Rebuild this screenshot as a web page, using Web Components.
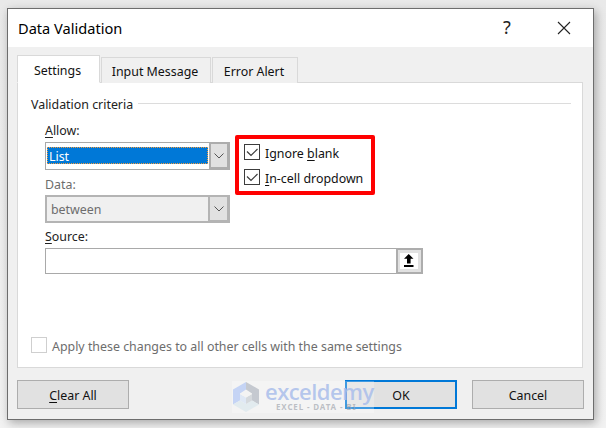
<!DOCTYPE html>
<html><head><meta charset="utf-8">
<style>
html,body{margin:0;padding:0;background:#f0f0f0;width:606px;height:428px;overflow:hidden}
body{font:13px "Noto Sans",sans-serif;color:#000;background:linear-gradient(#e9e9e9,#f2f2f2)}
</style></head><body>
<x-dialog>
  <span slot="title">Data Validation</span>
  <x-tabs slot="tabs"></x-tabs>
  <x-criteria slot="page"></x-criteria>
  <x-btn slot="left"><u style="text-underline-offset:2px">C</u>lear All</x-btn>
  <x-btn slot="right" primary>OK</x-btn>
  <x-btn slot="right">Cancel</x-btn>
  <x-watermark slot="over"></x-watermark>
</x-dialog>
<script>
function def(name, html){
  customElements.define(name, class extends HTMLElement{
    constructor(){super();const r=this.attachShadow({mode:'open'});r.innerHTML=html;}
  });
}
def('x-dialog',`<style>
:host{display:flex;flex-direction:column;box-sizing:border-box;width:587px;height:412px;margin:8px 0 0 7px;background:#f0f0f0;border:1px solid #6d6d6d;box-shadow:2px 3px 9px rgba(0,0,0,.3);position:relative}
.title{height:38px;flex:none;background:#fff;display:flex;align-items:center;padding-left:10px;font-size:14.6px}
.title .t{flex:1;padding-bottom:1px}
.help{width:16px;text-align:center;font-size:18px;margin-right:42px;color:#222;padding-bottom:2px}
.x{margin-right:22px;display:block}
.body{flex:1;padding:8px 10px 0 9px;display:flex;flex-direction:column}
.foot{display:flex;justify-content:space-between;margin-top:12px;margin-right:-1px}
.r{display:flex;gap:15px}
.l{display:flex}
</style>
<div class="title"><span class="t"><slot name="title"></slot></span><span class="help">?</span>
<svg class="x" width="14" height="14" viewBox="0 0 14 14"><path d="M1 1L13 13M13 1L1 13" stroke="#222" stroke-width="1.1" fill="none"/></svg></div>
<div class="body"><slot name="tabs"></slot><slot name="page"></slot>
<div class="foot"><div class="l"><slot name="left"></slot></div><div class="r"><slot name="right"></slot></div></div></div>
<slot name="over"></slot>`);

def('x-tabs',`<style>
:host{display:flex;align-items:flex-end;height:28px;flex:none;position:relative;z-index:1;margin-bottom:-1px}
.tab{box-sizing:border-box;height:26px;border:1px solid #d9d9d9;border-bottom:none;display:flex;align-items:center;justify-content:center;margin-left:1px;font-size:12.4px;color:#111;background:#f0f0f0;padding:2px 2px 0 0}
.a{height:28px;width:83px;margin-left:0;background:#fff;border-bottom:1px solid #fff;padding:3px 2px 0 0}
</style>
<div class="tab a">Settings</div><div class="tab" style="width:110px">Input Message</div><div class="tab" style="width:86px">Error Alert</div>`);

def('x-criteria',`<style>
:host{display:block;box-sizing:border-box;width:566px;height:286px;background:#fff;border:1px solid #d9d9d9;padding:11px 11px 0 13px;position:relative;font-size:12.4px;color:#222}
.head{display:flex;align-items:center;gap:5px;height:20px;color:#222}
.head i{flex:1;height:0;border-top:1px solid #dcdcdc;margin-top:-1px}
.main{padding-left:14px;margin-top:8px}
.lab{height:17px;line-height:17px}
.row{display:flex;gap:5px;align-items:flex-start;height:28px;margin-top:3px}
.dis{color:#6d6d6d}
.hl{box-sizing:border-box;width:140px;height:60px;flex:none;border:4px solid #f00;border-radius:2px;margin-top:-7px;padding:5px 0 0 5px;display:flex;flex-direction:column;gap:9px;color:#111}
.src{display:flex;width:378px;height:26px;margin-top:3px}
.src div{box-sizing:border-box;flex:1;border:1px solid #a9a9a9;border-right:none}
.src b{box-sizing:border-box;width:27px;border:2px solid #adadad;background:#e1e1e1;padding:3px 3px 3px 2px;display:block}
.src svg{display:block}
.apply{position:absolute;left:13px;top:254px;color:#6d6d6d}
u{text-underline-offset:2px}
</style>
<div class="head"><span>Validation criteria</span><i></i></div>
<div class="main">
 <div class="lab"><u>A</u>llow:</div>
 <div class="row"><x-combo active>List</x-combo>
  <div class="hl"><x-check checked>Ignore <u>b</u>lank</x-check><x-check checked><u>I</u>n-cell dropdown</x-check></div></div>
 <div class="lab dis" style="margin-top:6px">Data:</div>
 <x-combo style="margin-top:2px" dis>between</x-combo>
 <div class="lab" style="margin-top:5px"><u>S</u>ource:</div>
 <div class="src"><div></div><b><svg width="18" height="16" viewBox="0 0 18 16"><rect width="18" height="16" fill="#fff"/><path d="M8.700 1L13.500 5.700H10.600V10.500H7V5.700H4Z" fill="#000"/><rect x="4" y="12" width="9.500" height="2" fill="#000"/></svg></b></div>
</div>
<x-check class="apply" dim>Apply these changes to all other cells with the same settings</x-check>`);

def('x-combo',`<style>
:host{display:flex;box-sizing:border-box;width:185px;height:28px;border:1px solid #a9a9a9;background:#fff;font-size:12.4px;color:#111}
.v{flex:1;display:flex;align-items:center;box-sizing:border-box;padding-left:2px;margin:0 1px 0 1px}
:host([active]) .v{background:#0078d7;color:#fff;outline:1px dotted #f39c3d;outline-offset:-1px;height:17px;margin:4px 1px 0 1px;padding-top:1px}
:host([dis]){background:#f0f0f0;border:2px solid #b4b4b4;color:#6d6d6d}
:host([dis]) .v{padding-left:3px;margin:0 1px 0 1px}
.b{box-sizing:border-box;width:21px;background:#e1e1e1;border:2px solid #adadad;border-right-width:3px;border-bottom-width:3px;margin:-1px -1px -1px 0;display:flex;align-items:center;justify-content:center}
:host([dis]) .b{margin:-2px -2px -2px 0;border-color:#b4b4b4;width:22px}
</style><div class="v"><slot></slot></div><div class="b"><svg width="10" height="6" viewBox="0 0 10 6"><path d="M.5 .5L5 5L9.5 .5" fill="none" stroke="#555" stroke-width="1"/></svg></div>`);

def('x-check',`<style>
:host{display:flex;align-items:flex-start;gap:5px;height:16px;white-space:nowrap}
.box{box-sizing:border-box;width:16px;height:16px;border:1px solid #3c3c3c;background:#fff;flex:none}
:host([dim]) .box{border-color:#cfcfcf}
svg{display:none}
:host([checked]) svg{display:block}
span{margin-top:0;line-height:19px}
</style><div class="box"><svg width="14" height="14" viewBox="0 0 14 14"><path d="M2 6.500L6 10.500L12.500 4" fill="none" stroke="#3c3c3c" stroke-width="1.200"/></svg></div><span><slot></slot></span>`);

def('x-btn',`<style>
:host{display:flex;box-sizing:border-box;width:112px;height:29px;background:#e1e1e1;border:1px solid #adadad;align-items:center;justify-content:center;font-size:12.4px;color:#111;padding-top:1px}
:host([primary]){border:2px solid #0078d7}
</style><slot></slot>`);

def('x-watermark',`<style>
:host{position:absolute;left:224px;top:372px;width:142px;height:32px;background:rgba(255,255,255,.25);display:flex;gap:5px}
svg{flex:none}
.w{display:flex;flex-direction:column;align-items:flex-start;width:110px}
.e{font:600 22px/21px "Open Sans",sans-serif;color:rgba(170,190,235,.85);height:21px;letter-spacing:-.55px}
.s{font:bold 8px/9px "Noto Sans",sans-serif;color:rgba(150,155,165,.6);letter-spacing:.85px;white-space:nowrap;margin-left:11px}
</style>
<svg width="28" height="32" viewBox="0 0 28 32"><path d="M14 1L1 8.500V23.500L8 19.500V12.500L14 8.500Z" fill="#c5d4f5"/><path d="M14 1L27 8.500V23.500L20 19.500V12.500L14 8.500Z" fill="#c5c9d0"/><path d="M1 23.500L14 31L27 23.500L20 19.500L14 23L8 19.500Z" fill="#e2ebef"/><path d="M8 13L14 16.500V23L8 19.500Z" fill="#dfe8f5"/><path d="M20 13L14 16.500V23L20 19.500Z" fill="#d5d9dd"/><path d="M14 9.500L20 13L14 16.500L8 13Z" fill="#f3f3f3"/></svg>
<div class="w"><div class="e">exceldemy</div><div class="s">EXCEL - DATA - BI</div></div>`);
</script>
</body></html>
